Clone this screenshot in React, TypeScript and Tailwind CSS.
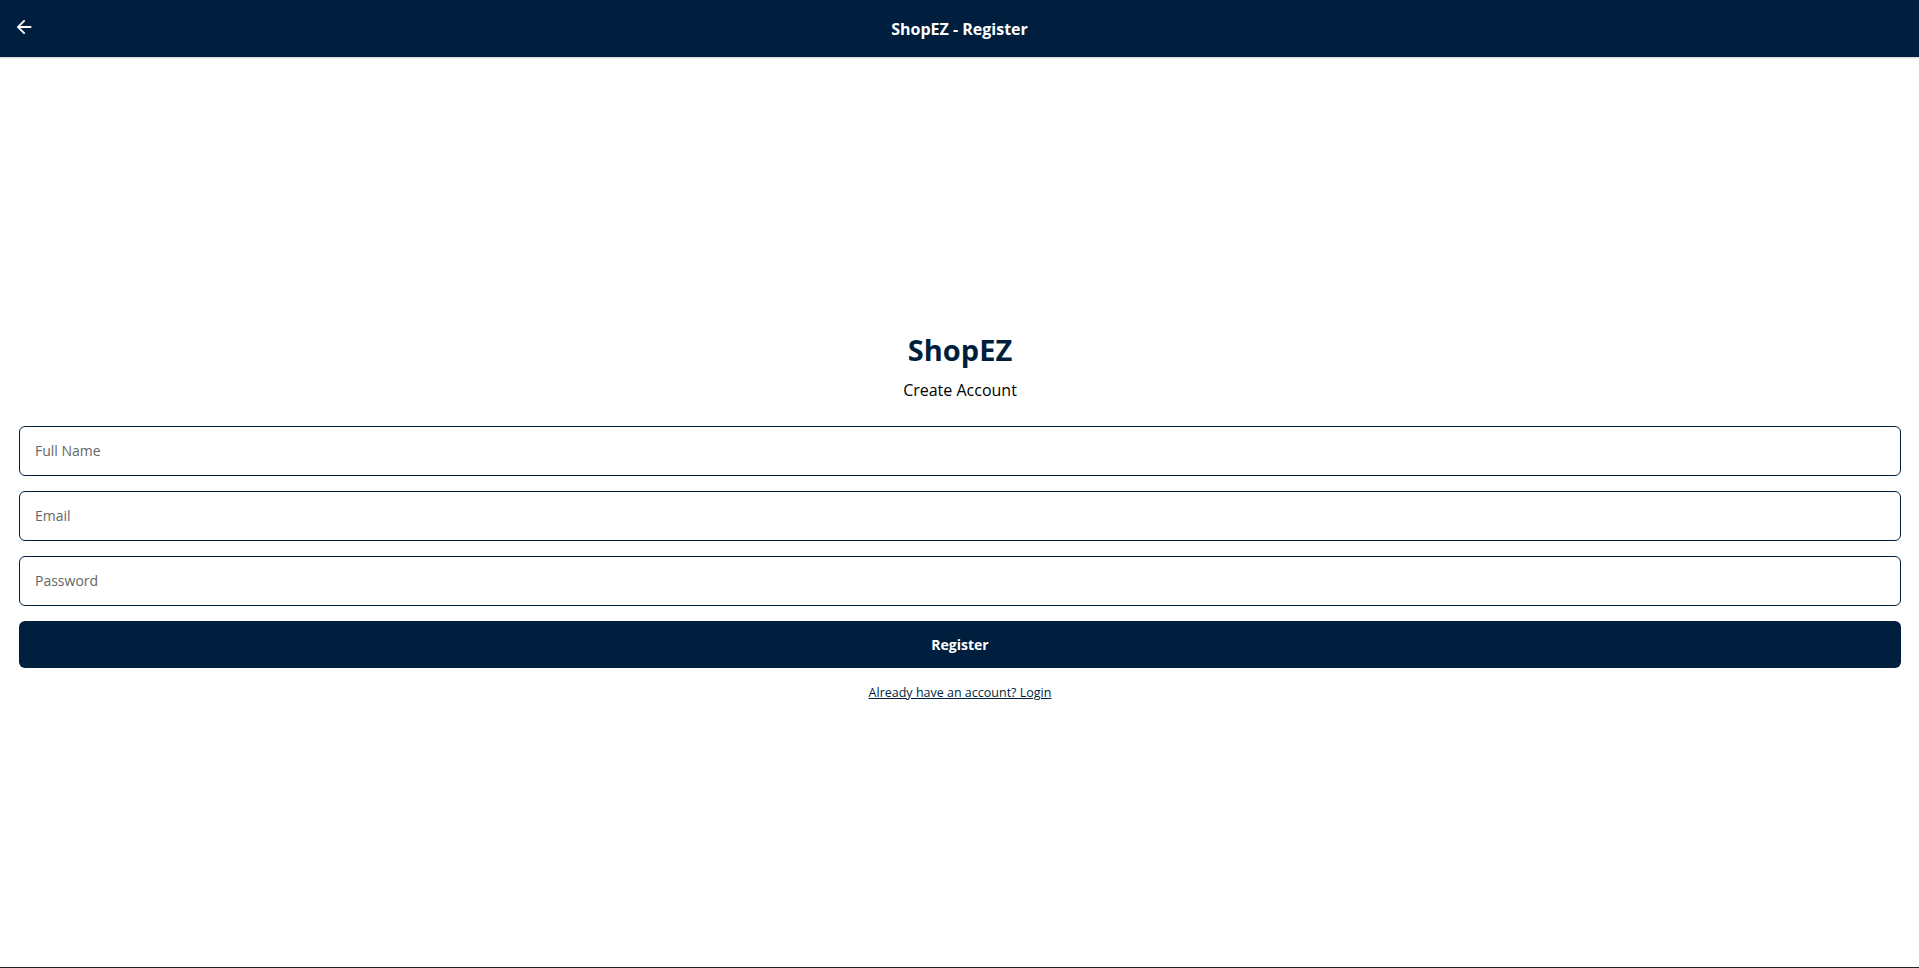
const font = { fontFamily: '"Open Sans", "Noto Sans", sans-serif' };

const ArrowBack = () => (
  <svg viewBox="0 0 24 24" className="h-[22px] w-[22px]" fill="currentColor">
    <path d="M20 11H7.83l5.59-5.59L12 4l-8 8 8 8 1.41-1.41L7.83 13H20z" />
  </svg>
);

const inputClass =
  "h-[50px] w-full rounded-[6px] border border-[#001f3f] px-[15px] text-[14px] text-black placeholder:text-[#666] outline-none";

const App = () => {
  return (
    <div
      className="flex min-h-screen flex-col bg-white border-b border-[#1f2229]"
      style={font}
    >
      {/* Top bar */}
      <header className="relative flex h-[57px] items-center justify-center bg-[#001f3f] shadow-[0_1px_2px_rgba(0,0,0,0.2)]">
        <button
          className="absolute left-[13px] top-[16px] text-white"
          aria-label="Back"
        >
          <ArrowBack />
        </button>
        <h1 className="text-[16px] font-bold text-white">ShopEZ - Register</h1>
      </header>

      {/* Form */}
      <main className="flex flex-1 items-center">
        <div className="w-full pl-[19px] pr-[18px] pt-[10px]">
          <div className="text-center">
            <h2 className="text-[29px] font-bold leading-[36px] text-[#001f3f]">
              ShopEZ
            </h2>
            <p className="mt-[10px] text-[16px] leading-[24px] text-black">
              Create Account
            </p>
          </div>

          <form className="mt-[24px] flex flex-col gap-[15px]">
            <input placeholder="Full Name" className={inputClass} />
            <input placeholder="Email" className={inputClass} />
            <input type="password" placeholder="Password" className={inputClass} />
            <button
              type="button"
              className="h-[47px] w-full rounded-[6px] bg-[#001f3f] text-[14px] font-bold text-white"
            >
              Register
            </button>
          </form>

          <div className="mt-[11px] text-center">
            <a href="#" className="text-[12.5px] text-[#001f3f] underline">
              Already have an account? Login
            </a>
          </div>
        </div>
      </main>
    </div>
  );
};

export default App;
